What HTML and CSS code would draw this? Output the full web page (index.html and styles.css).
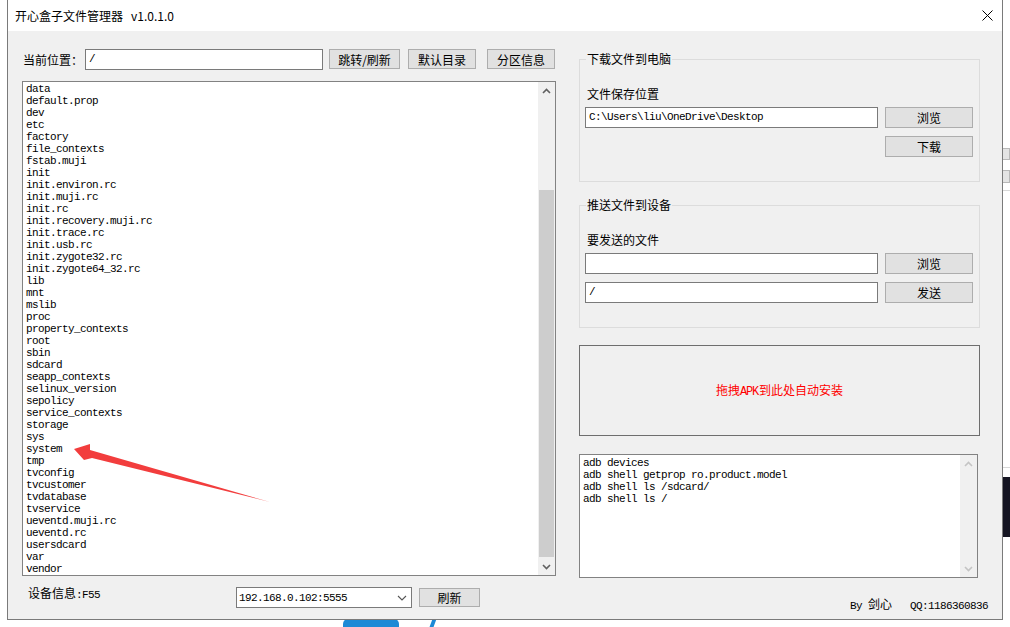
FILE: index.html
```html
<!DOCTYPE html>
<html lang="zh-CN">
<head>
    <meta charset="UTF-8">
    <meta name="viewport" content="width=device-width, initial-scale=1.0">
    <title>开心盒子文件管理器</title>
    <link rel="stylesheet" href="styles.css">
</head>
<body>
    <!-- bits of the desktop showing around the window -->
    <div class="desk desk-btn1"></div>
    <div class="desk desk-btn2"></div>
    <div class="desk desk-line1"></div>
    <div class="desk desk-line2"></div>
    <div class="desk desk-dark"></div>
    <div class="desk desk-blob"></div>
    <div class="desk desk-stroke"></div>

    <div class="window">
        <div class="titlebar">
            <span class="title">开心盒子文件管理器<span class="ver">v1.0.1.0</span></span>
            <svg class="close" width="11" height="11" viewBox="0 0 11 11">
                <path d="M0.5 0.5 L10.5 10.5 M10.5 0.5 L0.5 10.5" stroke="#000" stroke-width="1" fill="none"/>
            </svg>
        </div>

        <div class="client">
            <div class="left">
                <div class="toolbar">
                    <span class="cur-label">当前位置：</span>
                    <div class="textbox path mono">/</div>
                    <button class="btn b-go">跳转/刷新</button>
                    <button class="btn b-def">默认目录</button>
                    <button class="btn b-part">分区信息</button>
                </div>

                <div class="listbox">
                    <ul class="files mono">
                        <li>data</li>
                        <li>default.prop</li>
                        <li>dev</li>
                        <li>etc</li>
                        <li>factory</li>
                        <li>file_contexts</li>
                        <li>fstab.muji</li>
                        <li>init</li>
                        <li>init.environ.rc</li>
                        <li>init.muji.rc</li>
                        <li>init.rc</li>
                        <li>init.recovery.muji.rc</li>
                        <li>init.trace.rc</li>
                        <li>init.usb.rc</li>
                        <li>init.zygote32.rc</li>
                        <li>init.zygote64_32.rc</li>
                        <li>lib</li>
                        <li>mnt</li>
                        <li>mslib</li>
                        <li>proc</li>
                        <li>property_contexts</li>
                        <li>root</li>
                        <li>sbin</li>
                        <li>sdcard</li>
                        <li>seapp_contexts</li>
                        <li>selinux_version</li>
                        <li>sepolicy</li>
                        <li>service_contexts</li>
                        <li>storage</li>
                        <li>sys</li>
                        <li>system</li>
                        <li>tmp</li>
                        <li>tvconfig</li>
                        <li>tvcustomer</li>
                        <li>tvdatabase</li>
                        <li>tvservice</li>
                        <li>ueventd.muji.rc</li>
                        <li>ueventd.rc</li>
                        <li>usersdcard</li>
                        <li>var</li>
                        <li>vendor</li>
                    </ul>
                    <div class="vscroll">
                        <div class="sb-arrow">
                            <svg width="9" height="6" viewBox="0 0 9 6"><polyline points="1,5 4.5,1.5 8,5" stroke="#606060" stroke-width="1.6" fill="none"/></svg>
                        </div>
                        <div class="sb-track"><div class="sb-thumb"></div></div>
                        <div class="sb-arrow">
                            <svg width="9" height="6" viewBox="0 0 9 6"><polyline points="1,1 4.5,4.5 8,1" stroke="#606060" stroke-width="1.6" fill="none"/></svg>
                        </div>
                    </div>
                    <!-- red annotation arrow pointing at "system" -->
                    <svg class="annot" width="260" height="430" viewBox="0 0 260 430">
                        <polygon points="51,367 67,362 67,368 247,420 69,376 61,378" fill="#f23d3d"/>
                    </svg>
                </div>

                <div class="statusrow">
                    <span class="devinfo">设备信息<span class="mono">:F55</span></span>
                    <div class="combo">
                        <span class="mono">192.168.0.102:5555</span>
                        <svg width="10" height="6" viewBox="0 0 10 6"><polyline points="1,1 5,5 9,1" stroke="#555" stroke-width="1.1" fill="none"/></svg>
                    </div>
                    <button class="btn b-refresh">刷新</button>
                </div>
            </div>

            <div class="right">
                <fieldset class="group first">
                    <legend>下载文件到电脑</legend>
                    <div class="flabel">文件保存位置</div>
                    <div class="frow">
                        <div class="textbox ftext mono">C:\Users\liu\OneDrive\Desktop</div>
                        <button class="btn fbtn">浏览</button>
                    </div>
                    <div class="frow end">
                        <button class="btn fbtn">下载</button>
                    </div>
                </fieldset>

                <fieldset class="group">
                    <legend>推送文件到设备</legend>
                    <div class="flabel">要发送的文件</div>
                    <div class="frow">
                        <div class="textbox ftext mono"></div>
                        <button class="btn fbtn">浏览</button>
                    </div>
                    <div class="frow">
                        <div class="textbox ftext mono">/</div>
                        <button class="btn fbtn">发送</button>
                    </div>
                </fieldset>

                <div class="dropzone"><span class="drop-text">拖拽<span class="mono">APK</span>到此处自动安装</span></div>

                <div class="logbox">
                    <pre class="log mono">adb devices
adb shell getprop ro.product.model
adb shell ls /sdcard/
adb shell ls /</pre>
                    <div class="vscroll off">
                        <div class="sb-arrow">
                            <svg width="9" height="6" viewBox="0 0 9 6"><polyline points="1,5 4.5,1.5 8,5" stroke="#c4c4c4" stroke-width="1.6" fill="none"/></svg>
                        </div>
                        <div class="sb-track"></div>
                        <div class="sb-arrow">
                            <svg width="9" height="6" viewBox="0 0 9 6"><polyline points="1,1 4.5,4.5 8,1" stroke="#c4c4c4" stroke-width="1.6" fill="none"/></svg>
                        </div>
                    </div>
                </div>

                <div class="byline"><span class="mono">By </span>剑心<span class="mono">   QQ:1186360836</span></div>
            </div>
        </div>
    </div>
</body>
</html>
```

FILE: styles.css
```css
* {
    box-sizing: border-box;
}
body {
    margin: 0;
    width: 1010px;
    height: 627px;
    overflow: hidden;
    position: relative;
    background-color: #fff;
    font-family: "Noto Sans CJK SC", "Microsoft YaHei", sans-serif;
    font-size: 12px;
    color: #000;
}
.mono {
    font-family: "Liberation Mono", "Noto Sans CJK SC", monospace;
    font-size: 11px;
    letter-spacing: -0.6px;
}

/* desktop behind the window */
.desk {
    position: absolute;
}
.desk-btn1 {
    left: 1003px;
    top: 148px;
    width: 7px;
    height: 12px;
    background-color: #e4e4e4;
    border: 1px solid #b8b8b8;
    border-left: none;
}
.desk-btn2 {
    left: 1003px;
    top: 170px;
    width: 7px;
    height: 13px;
    background-color: #e4e4e4;
    border: 1px solid #b8b8b8;
    border-left: none;
}
.desk-line1 {
    left: 1003px;
    top: 190px;
    width: 7px;
    height: 1px;
    background-color: #d8d8d8;
}
.desk-line2 {
    left: 1003px;
    top: 467px;
    width: 7px;
    height: 1px;
    background-color: #d8d8d8;
}
.desk-dark {
    left: 1003px;
    top: 477px;
    width: 7px;
    height: 60px;
    background-color: #151522;
}
.desk-blob {
    left: 343px;
    top: 612px;
    width: 56px;
    height: 24px;
    border-radius: 50% 50% 0 0;
    background-color: #1c8ad6;
}
.desk-stroke {
    left: 431px;
    top: 616px;
    width: 4px;
    height: 14px;
    background-color: #1c8ad6;
    transform: skewX(-20deg);
}

/* window frame */
.window {
    position: relative;
    margin-left: 7px;
    width: 996px;
    height: 620px;
    border: 1px solid #7a7a7a;
    border-top: none;
    background-color: #f0f0f0;
    display: flex;
    flex-direction: column;
}
.titlebar {
    height: 31px;
    background-color: #fff;
    display: flex;
    align-items: center;
    justify-content: space-between;
    padding: 0 9px 0 7px;
}
.title {
    font-size: 12px;
    line-height: 16px;
}
.ver {
    margin-left: 8px;
}
.client {
    flex: 1;
    display: flex;
    padding-left: 14px;
}

/* left side: path bar + file list */
.left {
    width: 534px;
    display: flex;
    flex-direction: column;
}
.toolbar {
    margin-top: 18px;
    display: flex;
    align-items: flex-start;
    height: 21px;
}
.cur-label {
    width: 63px;
    padding-left: 1px;
    line-height: 21px;
}
.textbox {
    background-color: #fff;
    border: 1px solid #7a7a7a;
    height: 21px;
    line-height: 19px;
    padding-left: 3px;
    white-space: pre;
    overflow: hidden;
}
.path {
    width: 238px;
}
.btn {
    height: 20px;
    padding: 0;
    border: 1px solid #adadad;
    background-color: #e1e1e1;
    font-family: "Noto Sans CJK SC", "Microsoft YaHei", sans-serif;
    font-size: 12px;
    line-height: 17px;
    color: #000;
}
.b-go {
    margin-left: 6px;
    width: 71px;
}
.b-def {
    margin-left: 8px;
    width: 68px;
}
.b-part {
    margin-left: 11px;
    width: 68px;
}
.listbox {
    position: relative;
    margin-top: 11px;
    height: 495px;
    border: 1px solid #828282;
    background-color: #fff;
    display: flex;
}
.files {
    flex: 1;
    list-style: none;
    margin: 0;
    padding: 1px 0 0 3px;
    line-height: 12px;
    overflow: hidden;
}
.vscroll {
    width: 17px;
    display: flex;
    flex-direction: column;
    background-color: #f0f0f0;
}
.sb-arrow {
    height: 17px;
    display: flex;
    align-items: center;
    justify-content: center;
}
.sb-track {
    flex: 1;
    display: flex;
    flex-direction: column;
    align-items: center;
}
.sb-thumb {
    margin-top: 91px;
    width: 15px;
    height: 367px;
    background-color: #cdcdcd;
}
.annot {
    position: absolute;
    left: 0;
    top: 0;
    pointer-events: none;
}
.statusrow {
    margin-top: 11px;
    display: flex;
    align-items: flex-start;
}
.devinfo {
    margin-left: 6px;
    width: 208px;
    line-height: 12px;
}
.combo {
    width: 176px;
    height: 21px;
    border: 1px solid #7a7a7a;
    background-color: #fff;
    display: flex;
    align-items: center;
    justify-content: space-between;
    padding: 0 4px 0 2px;
}
.b-refresh {
    margin-left: 7px;
    margin-top: 1px;
    width: 61px;
    height: 19px;
    line-height: 16px;
}

/* right side */
.right {
    margin-left: 23px;
    width: 401px;
    display: flex;
    flex-direction: column;
}
.group {
    margin: 15px 0 0;
    padding: 0 6px 24px 5px;
    border: 1px solid #dcdcdc;
    min-width: 0;
}
.group.first {
    margin-top: 20px;
}
.group legend {
    margin-left: 1px;
    padding: 0 1px;
    line-height: 16px;
}
.flabel {
    margin-top: 19px;
    line-height: 16px;
    padding-left: 2px;
}
.frow {
    margin-top: 5px;
    display: flex;
}
.frow + .frow {
    margin-top: 8px;
}
.frow.end {
    justify-content: flex-end;
}
.ftext {
    width: 293px;
}
.fbtn {
    margin-left: 7px;
    width: 88px;
    height: 21px;
    line-height: 18px;
}
.dropzone {
    margin-top: 17px;
    height: 91px;
    border: 1px solid #6e6e6e;
    display: flex;
    align-items: center;
    justify-content: center;
    color: #ff0000;
}
.drop-text {
    line-height: 16px;
}
.drop-text .mono {
    font-size: 12px;
    letter-spacing: -1.2px;
    margin-right: 1px;
}
.logbox {
    margin-top: 18px;
    width: 399px;
    height: 124px;
    border: 1px solid #828282;
    background-color: #fff;
    display: flex;
}
.log {
    flex: 1;
    margin: 0;
    padding: 2px 0 0 3px;
    line-height: 12px;
}
.vscroll.off .sb-track {
    background-color: #f0f0f0;
}
.byline {
    margin-top: 19px;
    margin-right: -8px;
    text-align: right;
    line-height: 14px;
    white-space: pre;
}
```
